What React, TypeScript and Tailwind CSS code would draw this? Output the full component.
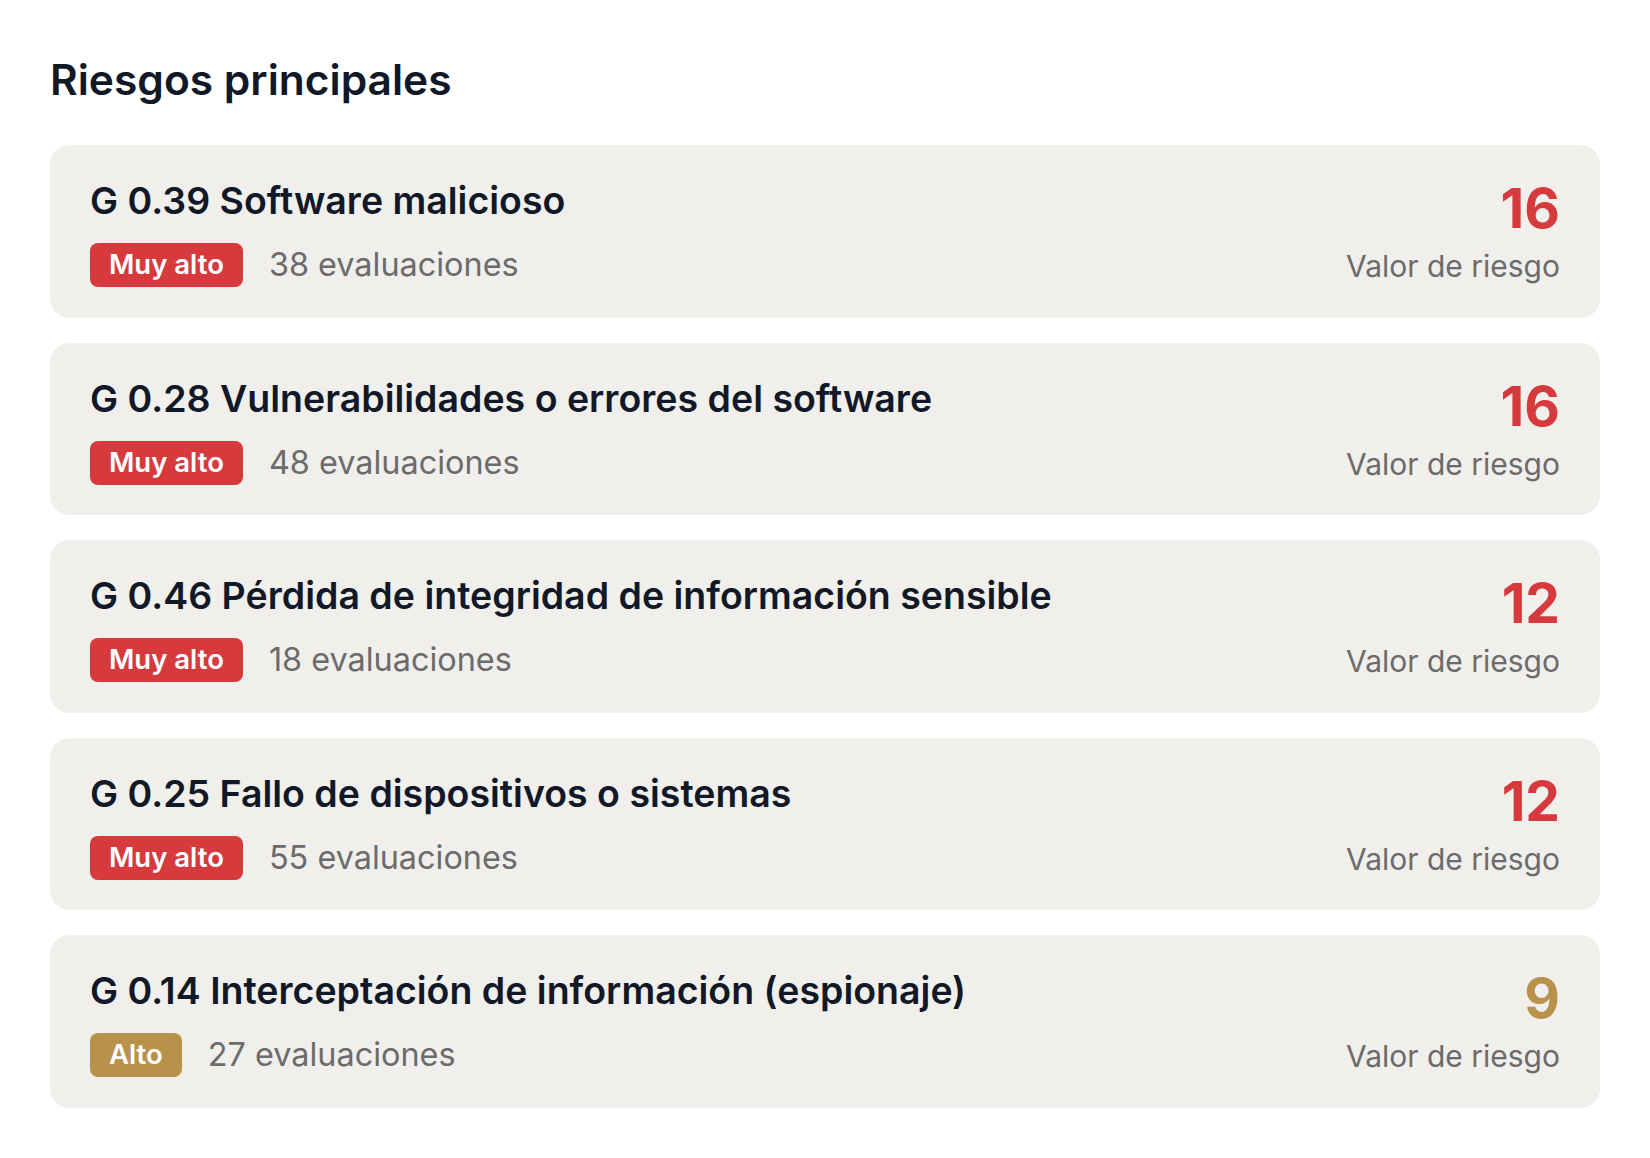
import React from "react";

type Risk = {
  code: string;
  name: string;
  level: "Muy alto" | "Alto";
  count: number;
  value: number;
};

const risks: Risk[] = [
  { code: "G 0.39", name: "Software malicioso", level: "Muy alto", count: 38, value: 16 },
  { code: "G 0.28", name: "Vulnerabilidades o errores del software", level: "Muy alto", count: 48, value: 16 },
  { code: "G 0.46", name: "Pérdida de integridad de información sensible", level: "Muy alto", count: 18, value: 12 },
  { code: "G 0.25", name: "Fallo de dispositivos o sistemas", level: "Muy alto", count: 55, value: 12 },
  { code: "G 0.14", name: "Interceptación de información (espionaje)", level: "Alto", count: 27, value: 9 },
];

function RiskCard({ risk }: { risk: Risk }) {
  const high = risk.level === "Muy alto";
  return (
    <div className="flex items-start justify-between h-[172.5px] rounded-[20px] bg-[#f0efeb] px-[40px] py-[30px]">
      <div className="flex flex-col">
        <h3 className="text-[37.5px] leading-[51px] font-semibold text-[#111827]">
          {risk.code} {risk.name}
        </h3>
        <div className="mt-[17px] flex items-center gap-[26px]">
          <span
            className={`flex h-[44px] items-center rounded-[8px] px-[19px] text-[27.5px] font-semibold text-white ${
              high ? "bg-[#d63a3d]" : "bg-[#b8914a]"
            }`}
          >
            {risk.level}
          </span>
          <span className="text-[32.4px] leading-[40px] text-[#6b6b6b]">{risk.count} evaluaciones</span>
        </div>
      </div>
      <div className="flex flex-col items-end pt-[5px]">
        <span className={`text-[55px] leading-[56px] font-bold ${high ? "text-[#d63a3d]" : "text-[#b8914a]"}`}>
          {risk.value}
        </span>
        <span className="mt-[10px] text-[30px] leading-[40px] text-[#6b6b6b]">Valor de riesgo</span>
      </div>
    </div>
  );
}

export default function App() {
  return (
    <div className="min-h-screen bg-white px-[50px] pt-[55px] font-['Inter',sans-serif]">
      <h2 className="mb-[40px] text-[42.5px] leading-[50px] font-semibold text-[#111827]">Riesgos principales</h2>
      <div className="flex flex-col gap-[25px]">
        {risks.map((r) => (
          <RiskCard key={r.code} risk={r} />
        ))}
      </div>
    </div>
  );
}
